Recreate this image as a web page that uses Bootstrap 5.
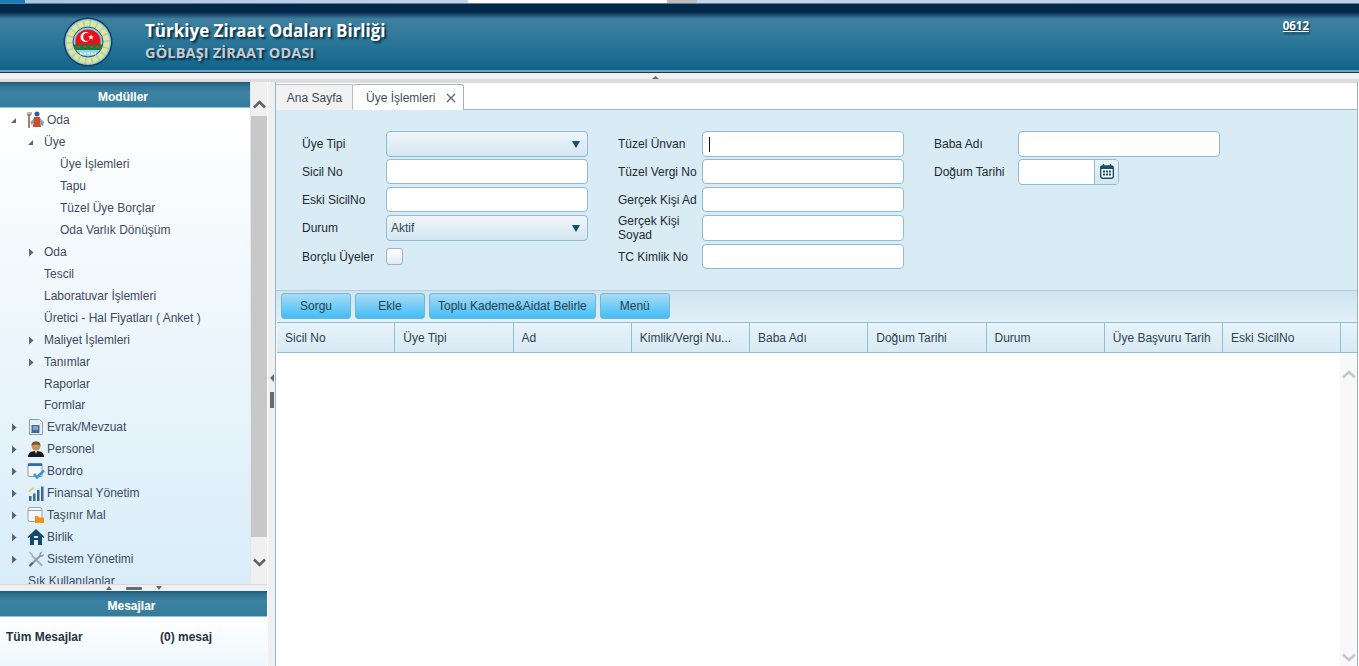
<!DOCTYPE html>
<html lang="tr">
<head>
<meta charset="utf-8">
<title>Üye İşlemleri</title>
<link href="https://cdn.jsdelivr.net/npm/bootstrap@5.3.0/dist/css/bootstrap.min.css" rel="stylesheet">
<style>
html,body{height:100%;overflow:hidden;background:#fff}
body{font:12px/1.2 "Liberation Sans",Arial,sans-serif;color:#2b3a45}
.shell{height:666px;width:1359px}
.topstrip{height:3px;background:linear-gradient(90deg,#a9c6e8,#c3d7ef 40%,#b8d0ec)}
.ts-a{width:25px;background:#0f7fc0}.ts-b{width:199px;margin-left:443px;background:#fff}.ts-c{width:30px;background:#bdbdbd}
.topline{height:1px;background:#6d7a85}
.hdr{height:69px;background:linear-gradient(#03284a 0,#03284a 8px,#3f7f9f 15px,#327b9c 30px,#11648b 66px,#11648b 100%);border-bottom:1px solid #0b3a55;box-shadow:inset 0 -2px 0 #6ea6bf}
.logo{width:50px;height:50px;margin-left:63px;margin-top:13px}
.hdr-text{margin-left:32px;margin-top:16px}
.hdr-t1{font:700 17px/22px "Open Sans","Noto Sans",sans-serif;color:#fff;text-shadow:2px 2px 2px #0a2c40;white-space:nowrap}
.hdr-t2{font:700 14.5px/18px "Open Sans","Noto Sans",sans-serif;letter-spacing:.15px;margin-top:2px;color:#c4ccd1;text-shadow:2px 2px 2px #0a2c40;white-space:nowrap}
.hdr-code{margin:14px 50px 0 auto;font:700 11.5px/15px "Open Sans","Noto Sans",sans-serif;color:#fff;text-decoration:underline;text-shadow:1px 2px 2px #0a2c40}
.hsplit{height:9px;background:linear-gradient(#f0f0f0 0,#f0f0f0 6px,#dcdcdc 6px)}
.hsplit svg{display:block;margin:3px 0 0 652px}
.main{height:584px}
.left{width:267px}
.lefttop{height:502px}
.treecol{width:250px}
.bar-head{height:26px;color:#fff;font-weight:700;text-align:center;line-height:30px;padding-right:4px;background:linear-gradient(#1d5873 0,#2f6f8f 3px,#3e82a3 10px,#347c9c 100%);border-bottom:1px solid #8fc4dc;text-shadow:0 0 1px #fff3}
.tree{height:476px;background:linear-gradient(#fff,#d9edf9);padding:1px 0 0;margin:0;list-style:none;overflow:hidden}
.tree-row{height:22px;line-height:22px;color:#3f4a5f;white-space:nowrap;display:flex;align-items:center}
.tree-row.tight{height:21px}
.lv0{padding-left:10px}.lv1{padding-left:27px}.lv2{padding-left:60px}.lv1n{padding-left:44px}.lvf{padding-left:28px}
.tw{width:7px;height:9px;flex:none}
.lv0 .tw{margin-right:10px}.lv0 .ic{margin-right:2px}
.lv1 .tw{margin-right:10px}
.ic{width:18px;height:18px;flex:none}
.sbar{width:17px;background:#f0f0f0;border-left:1px solid #e6e6e6}
.sb-btn{height:34px;padding-top:10px}.sb-thumb{height:421px;background:#c8c8c8}
.sb-end{height:47px;padding-top:4px}
.vsplit{width:8px;background:#f0f0f0;border-left:1px solid #fff;gap:10px;padding-top:34px}
.vgrip{display:block;width:4px;height:16px;background:#5f6d7a}
.msgbox{flex:1;background:linear-gradient(#fff,#eef7fc);padding:13px 6px 0;font-weight:700;color:#1f3442}
.msg1{width:154px}
.hs2{height:7px;background:#f0f0f0;border-top:1px solid #d8d8d8;gap:14px}
.hs2 i{display:block;width:16px;height:3px;background:#5f6d7a;border-radius:1px}
.right{width:1083px;border-left:1px solid #8eb6cc;border-right:1px solid #93b4c6}
.tabs{height:28px;background:#fff;border-top:1px solid #dcdcdc;border-bottom:1px solid #a3b6c4;padding-top:1px}
.tabi{height:26px;line-height:26px;color:#3e4c5c;background:#f2f2f2;border-top:1px solid #b8c0c8;border-right:1px solid #b8c0c8;width:77px;padding-left:1px;text-align:center;white-space:nowrap}
.tabi.on{background:#fff;width:111px;height:27px;border:1px solid #a7b0b8;border-left:0;border-bottom:0;border-radius:3px 3px 0 0;padding-left:13px;text-align:left;display:flex;align-items:center;gap:11px}
.formarea{height:180px;background:#d9ebf4;padding:21px 0 0 26px}
.fcol{width:286px;margin-right:30px}
.frow{display:flex;align-items:center;color:#1f2a33;line-height:14px}
.frow label{width:84px;flex:none;margin:0}
.fld{width:202px;height:25px;border:1px solid #8fbdd3;border-radius:4px;background:#fff;padding:0 4px;font:12px "Liberation Sans",sans-serif;color:#33475a;outline:0;display:block}
.fld-s{background:linear-gradient(#f0f6fa,#d4e6f1);display:flex;align-items:center;justify-content:space-between;padding-right:7px}
.caret-t{background:linear-gradient(#111,#111) 6px center/1px 15px no-repeat #fff}
.chk{width:17px;height:17px;border:1px solid #9cb4c4;border-radius:3px;background:linear-gradient(#fff,#e3ebf0);display:block}
.rh1{height:26px;margin-bottom:2px}.rh2{height:25px;margin-bottom:3px}.rh3{height:25px;margin-bottom:3px}.rh4{height:26px;margin-bottom:3px}.rh5{height:25px}
.rh1 .fld,.rh4 .fld{height:26px}
.dategrp{width:101px;height:26px;border:1px solid #8fbdd3;border-radius:4px;background:#fff;overflow:hidden}
.dategrp span{flex:1}
.dategrp b{width:24px;border-left:1px solid #8fbdd3;background:linear-gradient(#e8f2f8,#d5e7f1);display:flex;align-items:center;justify-content:center}
.tbar{height:32px;background:linear-gradient(#cfe4f0,#e3f0f7);padding:2px 0 0 5px;border-top:1px solid #b7ccd9;gap:4px}
.tbtn{height:26px;min-width:70px;padding:0 8px;border:1px solid #74b4d8;border-radius:3px;background:linear-gradient(#a8dcf6,#41bdf6);color:#274152;font:12px/24px "Liberation Sans",sans-serif}
.ghead{height:31px;background:linear-gradient(#e8f3f9,#d8eaf4);border-top:1px solid #8cc0d8;border-bottom:1px solid #8cc0d8;margin-left:1px}
.gc{width:118.25px;border-right:1px solid #8cc0d8;padding-left:8px;line-height:31px;color:#2f4150;white-space:nowrap;overflow:hidden;flex:none}
.gbody{flex:1;margin-left:1px;background:#fff}
.gscroll{width:17px;margin-left:auto;background:#f8f8f8;padding:17px 0 4px}
</style>
</head>
<body>
<div class="shell d-flex flex-column">
  <div class="topstrip d-flex"><div class="ts-a"></div><div class="ts-b"></div><div class="ts-c"></div></div>
  <div class="topline"></div>
  <header class="hdr d-flex">
    <svg class="logo" viewBox="0 0 50 50" aria-hidden="true">
      <circle cx="25" cy="25" r="24.5" fill="#1d3f55"/>
      <circle cx="25" cy="25" r="23" fill="#8fd0ea"/>
      <circle cx="25" cy="25" r="18.5" fill="none" stroke="#e9e38a" stroke-width="6" stroke-dasharray="5 1.4"/>
      <circle cx="25" cy="25" r="15" fill="#8fd0ea" stroke="#1d5a70" stroke-width="1"/>
      <path d="M12.5 24a12.5 11.5 0 0 1 25 0v5h-25z" fill="#e8121c"/>
      <circle cx="22.5" cy="20" r="5" fill="#fff"/><circle cx="24.2" cy="20" r="4" fill="#e8121c"/>
      <path d="m28 17.6.8 1.7 1.9.2-1.4 1.2.4 1.9-1.7-1-1.7 1 .4-1.9-1.4-1.2 1.9-.2z" fill="#fff"/>
      <path d="M10 27.5h30l-3 5.500h-24z" fill="#157a3a"/>
      <path d="M14 30h3m3.500 0h3m3.500 0h3m3 0h3" stroke="#d43c3c" stroke-width="1.500"/>
      <path d="M17 36.500h16" stroke="#f4f8fa" stroke-width="2" stroke-dasharray="2.500 1.200"/>
    </svg>
    <div class="hdr-text">
      <div class="hdr-t1">Türkiye Ziraat Odaları Birliği</div>
      <div class="hdr-t2">GÖLBAŞI ZİRAAT ODASI</div>
    </div>
    <div class="hdr-code">0612</div>
  </header>
  <div class="hsplit"><svg width="7" height="3" viewBox="0 0 7 3" aria-hidden="true"><path d="M3.500 0 7 3H0z" fill="#5f6d7a"/></svg></div>
  <div class="main d-flex">
    <aside class="left d-flex flex-column">
      <div class="lefttop d-flex">
        <div class="treecol d-flex flex-column">
          <div class="bar-head">Modüller</div>
          <ul class="tree">
            <li class="tree-row lv0"><svg class="tw" viewBox="0 0 7 9"><path d="M6 2v5H1z" fill="#5c6670"/></svg><svg class="ic" viewBox="0 0 18 18"><path d="M2 3v14" stroke="#8a5a30" stroke-width="1.500"/><path d="M0 1v3h4V1M2 1v3" fill="none" stroke="#6f7f8c"/><circle cx="10" cy="3" r="2.500" fill="#2c5fa0"/><path d="M7 6h6l1 10H6z" fill="#d8481c"/><path d="M13 7l4 4-1 4-2.500-1z" fill="#7f9fc0"/><path d="M7 7 3.500 11l1 3L7 12z" fill="#7f9fc0"/></svg><span>Oda</span></li>
            <li class="tree-row lv1"><svg class="tw" viewBox="0 0 7 9"><path d="M6 2v5H1z" fill="#5c6670"/></svg><span>Üye</span></li>
            <li class="tree-row lv2">Üye İşlemleri</li>
            <li class="tree-row lv2">Tapu</li>
            <li class="tree-row lv2">Tüzel Üye Borçlar</li>
            <li class="tree-row lv2">Oda Varlık Dönüşüm</li>
            <li class="tree-row lv1"><svg class="tw" viewBox="0 0 7 9"><path d="M2 .5l4.500 4L2 8.500z" fill="#5c6670"/></svg><span>Oda</span></li>
            <li class="tree-row lv1n">Tescil</li>
            <li class="tree-row lv1n">Laboratuvar İşlemleri</li>
            <li class="tree-row lv1n">Üretici - Hal Fiyatları ( Anket )</li>
            <li class="tree-row lv1"><svg class="tw" viewBox="0 0 7 9"><path d="M2 .5l4.500 4L2 8.500z" fill="#5c6670"/></svg><span>Maliyet İşlemleri</span></li>
            <li class="tree-row lv1"><svg class="tw" viewBox="0 0 7 9"><path d="M2 .5l4.500 4L2 8.500z" fill="#5c6670"/></svg><span>Tanımlar</span></li>
            <li class="tree-row lv1n tight">Raporlar</li>
            <li class="tree-row lv1n">Formlar</li>
            <li class="tree-row lv0"><svg class="tw" viewBox="0 0 7 9"><path d="M2 .5l4.500 4L2 8.500z" fill="#5c6670"/></svg><svg class="ic" viewBox="0 0 18 18"><path d="M2.500 1.500h10l3 3v12h-13z" fill="#e9eef3" stroke="#8ba0b2"/><path d="M4.500 7h8v8h-8z" fill="#3a6c97"/><path d="M6 9h5M6 11h5" stroke="#c9dcea"/></svg><span>Evrak/Mevzuat</span></li>
            <li class="tree-row lv0"><svg class="tw" viewBox="0 0 7 9"><path d="M2 .5l4.500 4L2 8.500z" fill="#5c6670"/></svg><svg class="ic" viewBox="0 0 18 18"><path d="M1 17c0-4 3-6 8-6s8 2 8 6z" fill="#1c1c1c"/><path d="M8 11h2l-1 3z" fill="#fff"/><circle cx="9" cy="6" r="4.500" fill="#c79356"/><path d="M4.500 6C4.500 2 7 1.500 9 1.500S13.500 2 13.500 6C12 4 6 4 4.500 6z" fill="#7c5526"/></svg><span>Personel</span></li>
            <li class="tree-row lv0"><svg class="tw" viewBox="0 0 7 9"><path d="M2 .5l4.500 4L2 8.500z" fill="#5c6670"/></svg><svg class="ic" viewBox="0 0 18 18"><rect x="1" y="1.500" width="14" height="13" rx="1" fill="#f4f6f8" stroke="#8b98a4"/><path d="M1 1.500h14v2.500H1z" fill="#2d6da8"/><path d="m7 12 3 3.500 7-7" fill="none" stroke="#3f93da" stroke-width="2.500"/></svg><span>Bordro</span></li>
            <li class="tree-row lv0"><svg class="tw" viewBox="0 0 7 9"><path d="M2 .5l4.500 4L2 8.500z" fill="#5c6670"/></svg><svg class="ic" viewBox="0 0 18 18"><path d="M2 12h2.500v5H2zM6 9.500h2.500V17H6zM10 6h2.500v11H10zM14 2.500h2.500V17H14z" fill="#3a6a8e"/><path d="M2 8c1-2 3-3.500 5-4" stroke="#e8c94a" stroke-width="1.500" fill="none"/></svg><span>Finansal Yönetim</span></li>
            <li class="tree-row lv0"><svg class="tw" viewBox="0 0 7 9"><path d="M2 .5l4.500 4L2 8.500z" fill="#5c6670"/></svg><svg class="ic" viewBox="0 0 18 18"><rect x="1" y="1.500" width="14" height="14" rx="2" fill="#f4f6f8" stroke="#96a2ac"/><path d="M1 4.500h14" stroke="#96a2ac"/><path d="M8 10h3l1 1.500h5V17H8z" fill="#f0921e"/></svg><span>Taşınır Mal</span></li>
            <li class="tree-row lv0"><svg class="tw" viewBox="0 0 7 9"><path d="M2 .5l4.500 4L2 8.500z" fill="#5c6670"/></svg><svg class="ic" viewBox="0 0 18 18"><path d="M9 1 .5 9l1 1L3 8.700V17h4v-5h4v5h4V8.700l1.500 1.300 1-1z" fill="#15486e"/><path d="M7 8h4v2H7z" fill="#e4f1f9"/></svg><span>Birlik</span></li>
            <li class="tree-row lv0"><svg class="tw" viewBox="0 0 7 9"><path d="M2 .5l4.500 4L2 8.500z" fill="#5c6670"/></svg><svg class="ic" viewBox="0 0 18 18"><path d="m3 1.500 3 3-1 1-3-3 .5-1zM5 4.500 16 15l-1.500 1.500L4 6z" fill="#a6b0b8"/><path d="M15.500 1.500c-2 0-3.500 1.500-3 3.500L2 15l1 2 10.500-10c2 .5 3.500-1 3.500-3l-2 1.500-1.500-1z" fill="#8f9aa3"/><path d="M2 15l3-3 1.500 1.500L3 17z" fill="#2a6bb5"/></svg><span>Sistem Yönetimi</span></li>
            <li class="tree-row lvf">Sık Kullanılanlar</li>
          </ul>
        </div>
        <div class="sbar d-flex flex-column">
          <div class="sb-btn d-flex align-items-center justify-content-center"><svg width="13" height="9" viewBox="0 0 13 9"><path d="M1 7.500 6.500 2 12 7.500" fill="none" stroke="#606060" stroke-width="2.500"/></svg></div>
          <div class="sb-thumb"></div>
          <div class="sb-end d-flex align-items-center justify-content-center"><svg width="13" height="9" viewBox="0 0 13 9"><path d="M1 1.500 6.500 7 12 1.500" fill="none" stroke="#606060" stroke-width="2.500"/></svg></div>
        </div>
      </div>
      <div class="hs2 d-flex align-items-center justify-content-center">
        <svg width="6" height="4" viewBox="0 0 6 4"><path d="M3 0l3 4H0z" fill="#5f6d7a"/></svg><i></i><svg width="6" height="4" viewBox="0 0 6 4"><path d="M3 4 6 0H0z" fill="#5f6d7a"/></svg>
      </div>
      <div class="bar-head">Mesajlar</div>
      <div class="msgbox d-flex"><span class="msg1">Tüm Mesajlar</span><span>(0) mesaj</span></div>
    </aside>
    <div class="vsplit d-flex flex-column align-items-center justify-content-center">
      <svg width="4" height="8" viewBox="0 0 4 8"><path d="M0 4l4-4v8z" fill="#5f6d7a"/></svg>
      <span class="vgrip"></span>
    </div>
    <main class="right d-flex flex-column">
      <div class="tabs d-flex">
        <div class="tabi">Ana Sayfa</div>
        <div class="tabi on"><span>Üye İşlemleri</span><svg width="10" height="10" viewBox="0 0 10 10"><path d="m1 1 8 8M9 1 1 9" stroke="#5f6770" stroke-width="1.300"/></svg></div>
      </div>
      <div class="formarea d-flex">
        <div class="fcol">
          <div class="frow rh1"><label>Üye Tipi</label><div class="fld fld-s"><span></span><svg width="8" height="7" viewBox="0 0 8 7"><path d="M0 0h8L4 7z" fill="#14506e"/></svg></div></div>
          <div class="frow rh2"><label>Sicil No</label><input class="fld"></div>
          <div class="frow rh3"><label>Eski SicilNo</label><input class="fld"></div>
          <div class="frow rh4"><label>Durum</label><div class="fld fld-s"><span>Aktif</span><svg width="8" height="7" viewBox="0 0 8 7"><path d="M0 0h8L4 7z" fill="#14506e"/></svg></div></div>
          <div class="frow rh5"><label>Borçlu Üyeler</label><span class="chk"></span></div>
        </div>
        <div class="fcol">
          <div class="frow rh1"><label>Tüzel Ünvan</label><input class="fld caret-t"></div>
          <div class="frow rh2"><label>Tüzel Vergi No</label><input class="fld"></div>
          <div class="frow rh3"><label>Gerçek Kişi Ad</label><input class="fld"></div>
          <div class="frow rh4"><label>Gerçek Kişi Soyad</label><input class="fld"></div>
          <div class="frow rh5"><label>TC Kimlik No</label><input class="fld"></div>
        </div>
        <div class="fcol">
          <div class="frow rh1"><label>Baba Adı</label><input class="fld"></div>
          <div class="frow rh2"><label>Doğum Tarihi</label><div class="dategrp d-flex"><span></span><b><svg width="14" height="15" viewBox="0 0 14 15"><rect x=".7" y="2" width="12.600" height="12.300" rx="2" fill="#fff" stroke="#14506e" stroke-width="1.400"/><path d="M1 2h12v3H1z" fill="#14506e"/><path d="M3.500 0v3M10.500 0v3" stroke="#14506e" stroke-width="1.400"/><path d="M3 6.500h2v2H3zM6 6.500h2v2H6zM9 6.500h2v2H9zM3 9.500h2v2H3zM6 9.500h2v2H6zM9 9.500h2v2H9z" fill="#14506e"/></svg></b></div></div>
        </div>
      </div>
      <div class="tbar d-flex">
        <button class="tbtn" type="button">Sorgu</button>
        <button class="tbtn" type="button">Ekle</button>
        <button class="tbtn" type="button">Toplu Kademe&amp;Aidat Belirle</button>
        <button class="tbtn" type="button">Menü</button>
      </div>
      <div class="ghead d-flex">
        <div class="gc">Sicil No</div><div class="gc">Üye Tipi</div><div class="gc">Ad</div><div class="gc">Kimlik/Vergi Nu...</div><div class="gc">Baba Adı</div><div class="gc">Doğum Tarihi</div><div class="gc">Durum</div><div class="gc">Üye Başvuru Tarih</div><div class="gc">Eski SicilNo</div>
      </div>
      <div class="gbody d-flex">
        <div class="gscroll d-flex flex-column align-items-center justify-content-between">
          <svg width="14" height="9" viewBox="0 0 14 9"><path d="M1 7.500 7 2l6 5.500" fill="none" stroke="#c4c8cc" stroke-width="2.500"/></svg>
          <svg width="14" height="9" viewBox="0 0 14 9"><path d="M1 1.500 7 7l6-5.500" fill="none" stroke="#c4c8cc" stroke-width="2.500"/></svg>
        </div>
      </div>
    </main>
  </div>
</div>
<script src="https://cdn.jsdelivr.net/npm/bootstrap@5.3.0/dist/js/bootstrap.bundle.min.js"></script>
</body>
</html>
